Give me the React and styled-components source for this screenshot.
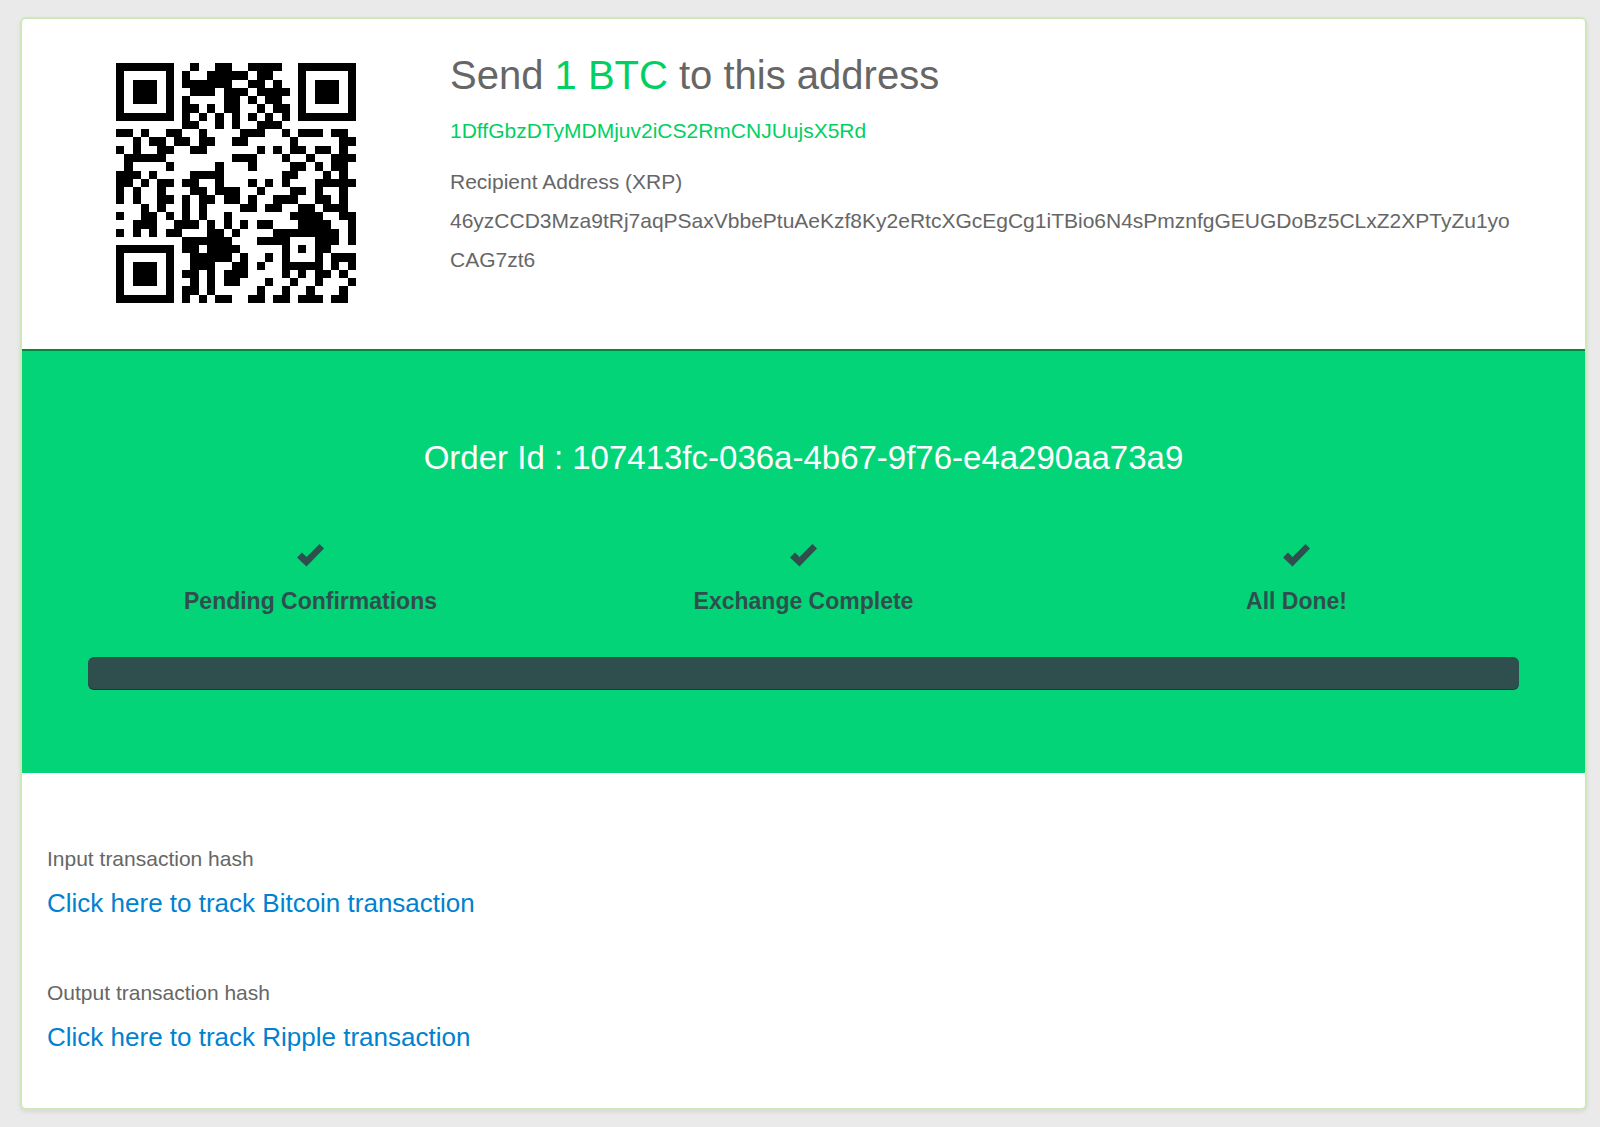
import React from "react";
import styled, { createGlobalStyle } from "styled-components";

const QR_ROWS = [
  "#######..#..##..####..#######",
  "#.....#.#..#####.##...#.....#",
  "#.###.#.######..##.#..#.###.#",
  "#.###.#..###.###.####.#.###.#",
  "#.###.#.#....##.#.##..#.###.#",
  "#.....#.##.#.##..#.##.#.....#",
  "#######.#.#.#.#.#.#.#.#######",
  "........##..#.#..###.........",
  "##.#..##..#....###..#.###.##.",
  "..#.##.##.##..##.....#.....##",
  "#.#..##..##......#.#.##.##.#.",
  ".#####........###...#..#..###",
  ".#....#.....#...#....##.#.##.",
  "###.#....####.......##...#.#.",
  "##.#.##.##..#...#.#.#...#####",
  "#.#..#...##.###..#...##.#..#.",
  "#.#..##.#.##.##.#..###..##.#.",
  "...#.#..#.#....##.##..##.###.",
  "#..##.#.#.#..#.......####..##",
  "..###..###.#.#.#.##...####..#",
  "#.#.#.##...##.#....########.#",
  "........######...####...###.#",
  "#######.##.####.....#.#.##...",
  "#.....#..#####.#..#.#...#.###",
  "#.###.#..###..##.#..#####.#.#",
  "#.###.#.##.#.###....#.#.##.#.",
  "#.###.#..#.#.##...#..#..#...#",
  "#.....#.##.#.....#..#..#...#.",
  "#######.#.#.##..##.##.###.##.",
];

const STEPS = ["Pending Confirmations", "Exchange Complete", "All Done!"];

const TRANSACTIONS = [
  { label: "Input transaction hash", link: "Click here to track Bitcoin transaction" },
  { label: "Output transaction hash", link: "Click here to track Ripple transaction" },
];

// one path for every dark run of a row
const qrPath = QR_ROWS.map((row, y) =>
  [...row.matchAll(/#+/g)]
    .map((run) => `M${run.index} ${y}h${run[0].length}v1h-${run[0].length}z`)
    .join("")
).join("");

const QrCode = () => (
  <QrImage viewBox="0 0 29 29" role="img" aria-label="Payment QR code">
    <path d={qrPath} />
  </QrImage>
);

const Check = () => (
  <CheckIcon viewBox="0 0 27 23" aria-hidden="true">
    <path d="M0 13.5 5 8.5 9.5 13 22.5 0 27 4.5 9.5 22.5Z" />
  </CheckIcon>
);

const App = () => {
  return (
    <>
      <GlobalStyle />
      <Card>
        <Payment>
          <QrCode />
          <div>
            <Title>
              Send <Amount>1 BTC</Amount> to this address
            </Title>
            <Deposit>1DffGbzDTyMDMjuv2iCS2RmCNJUujsX5Rd</Deposit>
            <Recipient>Recipient Address (XRP)</Recipient>
            <Recipient>
              46yzCCD3Mza9tRj7aqPSaxVbbePtuAeKzf8Ky2eRtcXGcEgCg1iTBio6N4sPmznfgGEUGDoBz5CLxZ2XPTyZu1yoCAG7zt6
            </Recipient>
          </div>
        </Payment>
        <Status>
          <OrderId>Order Id : 107413fc-036a-4b67-9f76-e4a290aa73a9</OrderId>
          <Steps>
            {STEPS.map((step) => (
              <Step key={step}>
                <Check />
                {step}
              </Step>
            ))}
          </Steps>
          <Progress
            role="progressbar"
            aria-label="Exchange progress"
            aria-valuenow={100}
            aria-valuemin={0}
            aria-valuemax={100}
          />
        </Status>
        <Transactions>
          {TRANSACTIONS.map(({ label, link }) => (
            <div key={label}>
              <HashLabel>{label}</HashLabel>
              <TrackLink href="#">{link}</TrackLink>
            </div>
          ))}
        </Transactions>
      </Card>
    </>
  );
};

const GlobalStyle = createGlobalStyle`
  * {
    box-sizing: border-box;
  }

  body {
    margin: 0;
    background: #eaeaea;
    color: #666;
    font-family: "Liberation Sans", Arial, sans-serif;
    font-size: 21px;
  }

  h1, h2, p, ol {
    margin: 0;
    padding: 0;
  }
`;

const Card = styled.main`
  margin: 17px 13px 17px 20px;
  background: #fff;
  border: 2px solid #cfe8ba;
  border-radius: 6px;
  box-shadow: 0 2px 4px rgba(0, 0, 0, 0.08);
`;

const Payment = styled.section`
  display: grid;
  grid-template-columns: 240px 1fr;
  column-gap: 94px;
  padding: 30px 62px 46px 94px;
`;

const QrImage = styled.svg`
  width: 240px;
  height: 240px;
  margin-top: 14px;
  shape-rendering: crispEdges;
`;

const Title = styled.h1`
  font-size: 40px;
  font-weight: 400;
  line-height: 52px;
`;

const Amount = styled.span`
  color: #00d062;
`;

const Deposit = styled.p`
  margin: 9px 0 10px;
  color: #00d062;
  line-height: 42px;
`;

const Recipient = styled.p`
  line-height: 39px;
  overflow-wrap: anywhere;
`;

const Status = styled.section`
  padding: 81px 66px 83px;
  background: #02d477;
  border-top: 2px solid #05873f;
`;

const OrderId = styled.h2`
  color: #fff;
  font-size: 33px;
  font-weight: 400;
  line-height: 52px;
  text-align: center;
`;

const Steps = styled.ol`
  display: grid;
  grid-template-columns: repeat(3, 1fr);
  margin: 60px -24px 40px;
  list-style: none;
`;

const Step = styled.li`
  display: flex;
  flex-direction: column;
  align-items: center;
  gap: 18px;
  color: #2f4f4f;
  font-size: 23px;
  font-weight: 700;
  line-height: 32px;
`;

const CheckIcon = styled.svg`
  width: 27px;
  height: 23px;
  fill: currentColor;
`;

const Progress = styled.div`
  height: 33px;
  background: #2f4f4f;
  border-radius: 6px;
  box-shadow: inset 0 -1px 0 rgba(0, 0, 0, 0.3);
`;

const Transactions = styled.section`
  display: grid;
  gap: 46px;
  padding: 66px 25px 47px;
`;

const HashLabel = styled.p`
  line-height: 40px;
`;

const TrackLink = styled.a`
  display: inline-block;
  color: #0082d0;
  font-size: 26px;
  line-height: 48px;
  text-decoration: none;
`;

export default App;
